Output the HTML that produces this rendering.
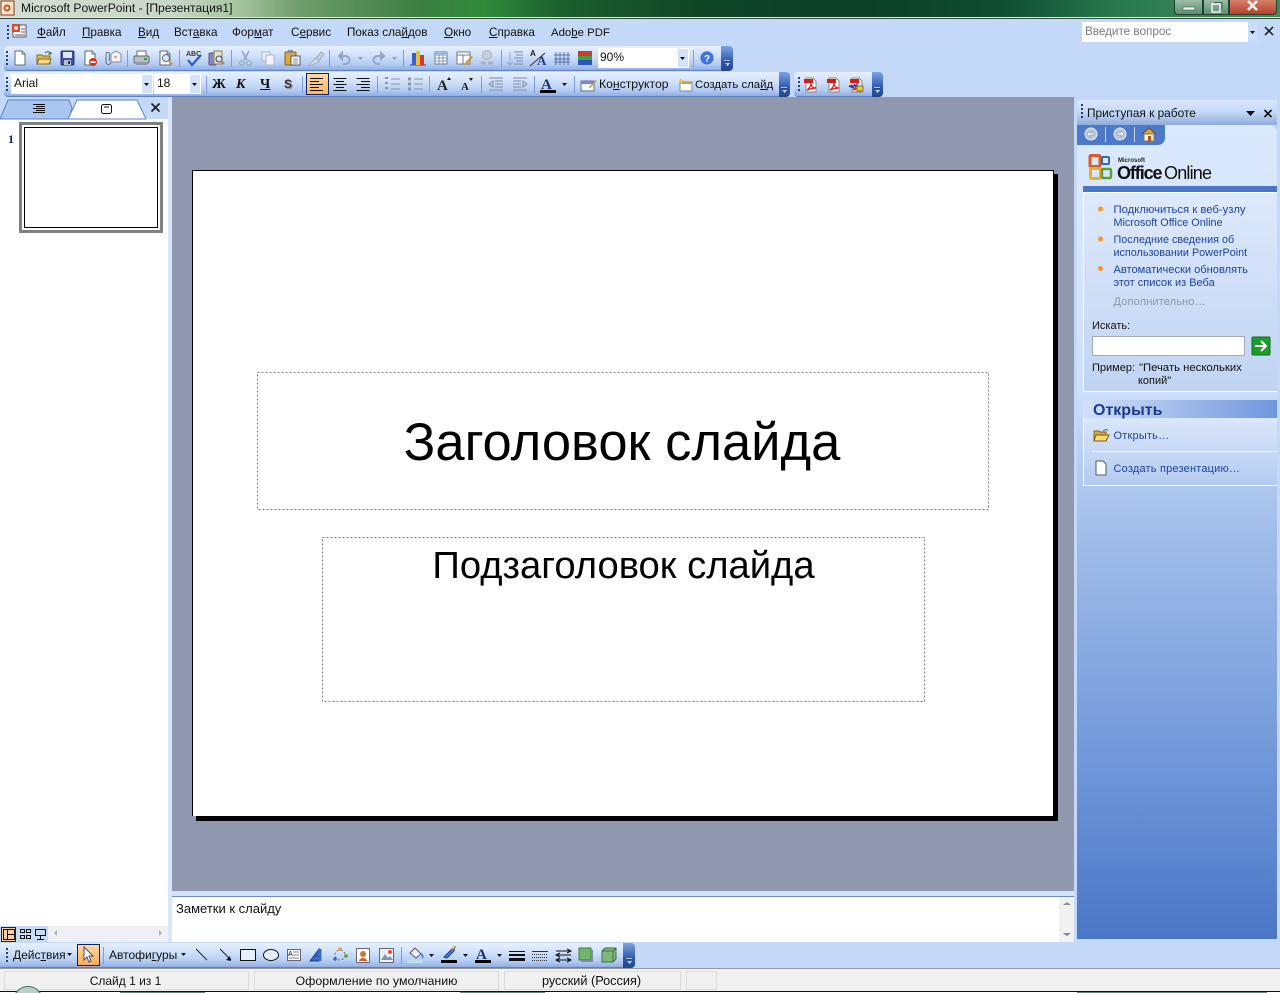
<!DOCTYPE html>
<html lang="ru"><head><meta charset="utf-8"><title>Microsoft PowerPoint</title>
<style>
html,body{margin:0;padding:0;width:1280px;height:993px;overflow:hidden;background:#c3d9f7}
body{position:relative;font-family:"Liberation Sans",sans-serif;font-size:12px;color:#111}
.a{position:absolute}
.t{position:absolute;white-space:nowrap;line-height:14px;height:14px}
.m{font-size:11.7px}
.tb{position:absolute;background:linear-gradient(#e6f0fe 0%,#d3e3fb 35%,#b5cdf3 75%,#8eaee4 100%);border-bottom:1px solid #5f82bf;border-radius:4px;box-sizing:border-box}
.ch{position:absolute;background:linear-gradient(#7da3e2,#2f5cae 60%,#1f478f);border-radius:0 4px 4px 0}
.lnk{color:#1d439e;font-size:11px;line-height:13px}
svg{position:absolute;left:0;top:0}
</style></head><body>

<!-- title bar -->
<div class="a" style="left:0;top:0;width:1280px;height:18px;background:linear-gradient(90deg,#d3ddd2 0,#c8d8c6 170px,#a9c6a1 235px,#6f9c6c 300px,#3b7f42 420px,#2f8a3a 485px,#1c5f2e 560px,#0f4627 700px,#0b3f26 850px,#0f4d30 1000px,#2a7a50 1120px,#3f8c62 1280px)"></div>
<div class="a" style="left:0;top:17px;width:1280px;height:1px;background:#dfe8df"></div>
<div class="a" style="left:0;top:18px;width:1280px;height:1px;background:#33473a"></div>
<div class="t" style="left:21px;top:1px;font-size:12.1px;color:#141414">Microsoft PowerPoint - [Презентация1]</div>
<div class="a" style="left:1174px;top:-3px;width:29px;height:18px;background:linear-gradient(#a6c4ad,#5b8f72);border:1px solid #23402f;border-radius:0 0 0 4px;box-sizing:border-box"></div>
<div class="a" style="left:1203px;top:-3px;width:26px;height:18px;background:linear-gradient(#a6c4ad,#5b8f72);border:1px solid #23402f;box-sizing:border-box"></div>
<div class="a" style="left:1229px;top:-3px;width:48px;height:18px;background:linear-gradient(#d98a74,#b5412d);border:1px solid #23402f;border-radius:0 0 4px 0;box-sizing:border-box"></div>

<!-- menu -->
<div class="t m" style="left:37px;top:26px"><u>Ф</u>айл</div>
<div class="t m" style="left:82px;top:26px"><u>П</u>равка</div>
<div class="t m" style="left:138px;top:26px"><u>В</u>ид</div>
<div class="t m" style="left:174px;top:26px">Вст<u>а</u>вка</div>
<div class="t m" style="left:232px;top:26px">Фор<u>м</u>ат</div>
<div class="t m" style="left:291px;top:26px">С<u>е</u>рвис</div>
<div class="t m" style="left:347px;top:26px">Показ сла<u>й</u>дов</div>
<div class="t m" style="left:444px;top:26px"><u>О</u>кно</div>
<div class="t m" style="left:489px;top:26px"><u>С</u>правка</div>
<div class="t" style="left:551px;top:26px;font-size:11.4px">Ado<u>b</u>e PDF</div>
<div class="a" style="left:1082px;top:22px;width:176px;height:20px;background:#fff"></div>
<div class="a" style="left:1248px;top:22px;width:10px;height:20px;background:#c9dcf8"></div>
<div class="t" style="left:1085px;top:25px;color:#7b7b7b;font-size:11.7px">Введите вопрос</div>

<!-- toolbars -->
<div class="tb" style="left:4px;top:46px;width:722px;height:25px"></div>
<div class="ch" style="left:721px;top:46px;width:12px;height:25px"></div>
<div class="tb" style="left:4px;top:72px;width:780px;height:25px"></div>
<div class="ch" style="left:779px;top:72px;width:11px;height:25px"></div>
<div class="tb" style="left:794px;top:72px;width:82px;height:25px"></div>
<div class="ch" style="left:872px;top:72px;width:11px;height:25px"></div>

<div class="a" style="left:598px;top:48px;width:91px;height:20px;background:#fff"></div>
<div class="a" style="left:677px;top:48px;width:12px;height:20px;background:#d2e2fa;border:1px solid #fff;box-sizing:border-box"></div>
<div class="t" style="left:600px;top:50px">90%</div>
<div class="a" style="left:11px;top:74px;width:142px;height:20px;background:#fff"></div>
<div class="a" style="left:141px;top:74px;width:12px;height:20px;background:#d2e2fa;border:1px solid #fff;box-sizing:border-box"></div>
<div class="t" style="left:14px;top:76px">Arial</div>
<div class="a" style="left:154px;top:74px;width:47px;height:20px;background:#fff"></div>
<div class="a" style="left:189px;top:74px;width:12px;height:20px;background:#d2e2fa;border:1px solid #fff;box-sizing:border-box"></div>
<div class="t" style="left:157px;top:76px">18</div>
<div class="a" style="left:306px;top:73px;width:23px;height:22px;background:linear-gradient(#ffd9a0,#fdb666);border:1px solid #0a246a;box-sizing:border-box"></div>
<div class="t" style="left:212px;top:78px;font:bold 14px/14px 'Liberation Serif',serif">Ж</div>
<div class="t" style="left:236px;top:78px;font:italic bold 14px/14px 'Liberation Serif',serif">К</div>
<div class="t" style="left:260px;top:78px;font:bold 14px/14px 'Liberation Serif',serif;text-decoration:underline">Ч</div>
<div class="t" style="left:284px;top:77px;font:bold 12px/14px 'Liberation Sans',sans-serif;color:#333;text-shadow:1px 1px 1px #8a8a8a">S</div>
<div class="t" style="left:599px;top:77px;font-size:12.2px">Ко<u>н</u>структор</div>
<div class="t" style="left:695px;top:78px;font-size:11.4px">Создать сла<u>й</u>д</div>

<!-- left pane -->
<div class="a" style="left:0;top:119px;width:168px;height:807px;background:#fff"></div>
<div class="a" style="left:168px;top:97px;width:4px;height:845px;background:#d9e6fb"></div>
<div class="t" style="left:8px;top:132px;font:bold 12px/14px 'Liberation Serif',serif;color:#14284f">1</div>
<div class="a" style="left:19px;top:122px;width:144px;height:111px;border:3px solid #808080;box-sizing:border-box;background:#fff"></div>
<div class="a" style="left:24px;top:127px;width:134px;height:101px;border:1px solid #000;box-sizing:border-box;background:#fff"></div>
<div class="a" style="left:0;top:926px;width:48px;height:16px;background:#c8dcf8"></div>
<div class="a" style="left:48px;top:926px;width:120px;height:16px;background:#eef0f3"></div>
<div class="a" style="left:1px;top:927px;width:15px;height:15px;background:#f5cfa8;border:1px solid #0a246a;box-sizing:border-box"></div>

<!-- workspace -->
<div class="a" style="left:172px;top:97px;width:902px;height:794px;background:#8f98ae"></div>
<div class="a" style="left:196px;top:174px;width:862px;height:647px;background:#000"></div>
<div class="a" style="left:192px;top:170px;width:862px;height:646px;background:#fff;border:solid #000;box-sizing:border-box;border-width:1px 1px 0 1px"></div>
<div class="t" style="left:256px;width:732px;text-align:center;top:411px;height:64px;font-size:52.5px;line-height:64px;color:#000">Заголовок слайда</div>
<div class="t" style="left:322px;width:603px;text-align:center;top:544px;height:44px;font-size:38.2px;line-height:44px;color:#000">Подзаголовок слайда</div>

<!-- notes -->
<div class="a" style="left:172px;top:891px;width:902px;height:5px;background:#d4e3fb"></div>
<div class="a" style="left:172px;top:896px;width:902px;height:1px;background:#6d8ccb"></div>
<div class="a" style="left:172px;top:897px;width:887px;height:45px;background:#fff"></div>
<div class="a" style="left:1059px;top:897px;width:15px;height:45px;background:#f1f1f1"></div>
<div class="t" style="left:176px;top:902px;font-size:13px">Заметки к слайду</div>

<!-- task pane -->
<div class="a" style="left:1074px;top:97px;width:3px;height:845px;background:#c3d9f7"></div>
<div class="a" style="left:1077px;top:100px;width:200px;height:25px;background:linear-gradient(#d9e7fc,#c7dbf8 45%,#8facde)"></div>
<div class="t" style="left:1087px;top:106px;font-size:11.9px">Приступая к работе</div>
<div class="a" style="left:1077px;top:125px;width:200px;height:814px;background:linear-gradient(#dbe9fd 0,#cfe0fa 260px,#a3bfea 400px,#6b93d7 660px,#4a76c6 814px);border-radius:0 8px 0 0"></div>
<div class="a" style="left:1077px;top:125px;width:88px;height:20px;background:#4d7ac8;border-radius:0 0 7px 0"></div>
<div class="a" style="left:1083px;top:186px;width:194px;height:6px;background:#4a76c8"></div>
<div class="a" style="left:1083px;top:192px;width:194px;height:200px;background:linear-gradient(#dde9fc,#c0d4f2);border-left:1px solid #fff;border-bottom:1px solid #fff;border-top:1px solid #fff;box-sizing:border-box"></div>
<div class="a" style="left:1083px;top:400px;width:194px;height:18px;background:linear-gradient(90deg,#d2e1f9,#6f96dd);border-radius:5px 0 0 0"></div>
<div class="a" style="left:1083px;top:418px;width:194px;height:68px;background:linear-gradient(#dae7fb,#b4cbf0);border-left:1px solid #fff;border-bottom:1px solid #fff;box-sizing:border-box"></div>
<div class="a" style="left:1092px;top:451px;width:185px;height:1px;background:#f2f7fe"></div>
<div class="t" style="left:1117px;top:164px;font-size:18px;line-height:18px;height:18px;font-weight:bold;letter-spacing:-1.1px;color:#101010">Office</div>
<div class="t" style="left:1164px;top:164px;font-size:18px;line-height:18px;height:18px;letter-spacing:-.8px;color:#101010">Online</div>
<div class="t" style="left:1118px;top:158px;font-size:6px;line-height:7px;height:7px;font-weight:bold;color:#222">Microsoft</div>
<div class="t lnk" style="left:1113.500px;top:204px;font-size:11.300px">Подключиться к веб-узлу</div>
<div class="t lnk" style="left:1113.500px;top:217px;font-size:10.800px">Microsoft Office Online</div>
<div class="t lnk" style="left:1113.500px;top:234px;font-size:10.800px">Последние сведения об</div>
<div class="t lnk" style="left:1113.500px;top:247px;font-size:10.800px">использовании PowerPoint</div>
<div class="t lnk" style="left:1113.500px;top:264px;font-size:11.100px">Автоматически обновлять</div>
<div class="t lnk" style="left:1113.500px;top:277px">этот список из Веба</div>
<div class="t lnk" style="left:1113.500px;top:296px;color:#8a98ad;letter-spacing:.15px">Дополнительно…</div>
<div class="t" style="left:1092px;top:319px;font-size:11px">Искать:</div>
<div class="a" style="left:1092px;top:336px;width:153px;height:20px;background:#fff;border:1px solid #a5acb5;box-sizing:border-box"></div>
<div class="t" style="left:1092px;top:361px;font-size:11px">Пример:</div>
<div class="t" style="left:1139px;top:361px;font-size:11.300px">"Печать нескольких</div>
<div class="t" style="left:1138px;top:374px;font-size:11px">копий"</div>
<div class="t" style="left:1093px;top:403px;font:bold 16px/15px 'Liberation Sans',sans-serif;height:15px;color:#1c3a8e">Открыть</div>
<div class="t lnk" style="left:1113.500px;top:430px;letter-spacing:.2px">Открыть…</div>
<div class="t lnk" style="left:1113.500px;top:463px;letter-spacing:.2px">Создать презентацию…</div>

<!-- drawing toolbar -->
<div class="tb" style="left:0;top:943px;width:628px;height:25px;border-radius:0 4px 4px 0"></div>
<div class="ch" style="left:623px;top:943px;width:12px;height:25px"></div>
<div class="a" style="left:77px;top:944px;width:23px;height:22px;background:linear-gradient(#ffd9a0,#fda95a);border:1px solid #0a246a;box-sizing:border-box"></div>
<div class="t" style="left:13px;top:948px">Дейс<u>т</u>вия</div>
<div class="t" style="left:109px;top:948px">Автофи<u>г</u>уры</div>

<!-- status -->
<div class="a" style="left:0;top:968px;width:1280px;height:23px;background:#f0f0f0;border-top:1px solid #9a9a9a;box-sizing:border-box"></div>
<div class="a" style="left:4px;top:971px;width:245px;height:19px;border:1px solid #dcdcdc;box-sizing:border-box"></div>
<div class="a" style="left:254px;top:971px;width:245px;height:19px;border:1px solid #dcdcdc;box-sizing:border-box"></div>
<div class="a" style="left:504px;top:971px;width:177px;height:19px;border:1px solid #dcdcdc;box-sizing:border-box"></div>
<div class="a" style="left:686px;top:971px;width:31px;height:19px;border:1px solid #dcdcdc;box-sizing:border-box"></div>
<div class="t" style="left:3px;width:245px;text-align:center;top:974px">Слайд 1 из 1</div>
<div class="t" style="left:254px;width:245px;text-align:center;top:974px;font-size:12.400px">Оформление по умолчанию</div>
<div class="t" style="left:504px;width:175px;text-align:center;top:974px;font-size:12.700px">русский (Россия)</div>
<div class="a" style="left:0;top:991px;width:1280px;height:2px;background:#fff"></div>
<div class="a" style="left:0;top:991px;width:1280px;height:1px;background:#111"></div>
<div class="a" style="left:120px;top:992px;width:85px;height:1px;background:#5c8a78"></div>
<div class="a" style="left:460px;top:992px;width:85px;height:1px;background:#5c8a78"></div>
<div class="a" style="left:1077px;top:992px;width:190px;height:1px;background:#5c8a78"></div>
<div class="a" style="left:13px;top:986px;width:30px;height:30px;border-radius:50%;background:#b9d2c6;border:1px solid #43685e;box-sizing:border-box"></div>

<svg width="1280" height="993" viewBox="0 0 1280 993" fill="none">
<defs>
<g id="dd"><path d="M0 0h5l-2.500 3z" fill="#111"/></g>
<g id="ddg"><path d="M0 0h5l-2.500 3z" fill="#8f9fb8"/></g>
<g id="grip"><rect x="0" y="0" width="2" height="2" fill="#27416f"/><rect x="0" y="4" width="2" height="2" fill="#27416f"/><rect x="0" y="8" width="2" height="2" fill="#27416f"/><rect x="0" y="12" width="2" height="2" fill="#27416f"/></g>
<g id="che"><path d="M0 0h6v1h-6zM1 3h5l-2.500 3z" fill="#fff"/><path d="M0 1h6M1.500 4h3" stroke="#111" stroke-width=".6"/></g>
<g id="doc"><path d="M3 1h7l3 3v11H3z" fill="#fff" stroke="#5a6a80"/><path d="M10 1v3h3" fill="#dfe6f0" stroke="#5a6a80"/></g>
<g id="pdf"><path d="M3 1h7l3 3v11H3z" fill="#fbfbf6" stroke="#8a8a80"/><rect x="1" y="2" width="9" height="4" fill="#d9181c"/><path d="M4 13c3-2 4-5 4-7 0 3 2 5 5 5-3 0-6 1-9 2z" fill="none" stroke="#d9181c" stroke-width="1.200"/></g>
</defs>

<!-- placeholders -->
<rect x="257.500" y="372.500" width="731" height="137" stroke="#808080" stroke-dasharray="2 2"/>
<rect x="322.500" y="537.500" width="602" height="164" stroke="#808080" stroke-dasharray="2 2"/>

<!-- app icon + title -->
<rect x="1" y="1" width="13" height="14" fill="#f6e4cf" stroke="#8a3d20"/><circle cx="7" cy="8" r="3.500" fill="#d2531f"/><circle cx="7" cy="8" r="1.500" fill="#fff3e6"/>
<!-- window controls -->
<rect x="1183" y="7" width="12" height="3" fill="#eef4ef" stroke="#3e5c4b" stroke-width=".6"/>
<rect x="1212" y="4" width="8" height="8" fill="none" stroke="#eef4ef" stroke-width="1.500"/><path d="M1214 2.500h8v7" stroke="#3e5c4b"/>
<path d="M1248 1l9 9M1257 1l-9 9" stroke="#f6f3f0" stroke-width="2.600"/>

<!-- menu grip + doc icon -->
<use href="#grip" x="7" y="25"/>
<rect x="13" y="25" width="13" height="12" fill="#fff" stroke="#556"/><rect x="12" y="24" width="8" height="8" fill="#d94a26"/><circle cx="16" cy="28" r="2" fill="#fbe2d2"/><path d="M21 29h4M21 32h4M15 35h10" stroke="#556"/>
<path d="M1265 27l8 8M1273 27l-8 8" stroke="#111" stroke-width="1.500"/>
<use href="#dd" x="1250" y="31"/>

<!-- toolbar 1 -->
<use href="#grip" x="6" y="51"/>
<use href="#doc" x="12" y="50"/>
<g transform="translate(36,50)"><path d="M1 5h5l1 1h7v8H1z" fill="#e2b64c" stroke="#8a6a1c"/><path d="M3 9h12l-2 5H1z" fill="#f8dc82" stroke="#8a6a1c"/><path d="M9 3c2-2 4-2 5 0l-1 1 2 0v-2" stroke="#3e6f3e" fill="none"/></g>
<g transform="translate(60,50)"><rect x="1" y="1" width="13" height="14" rx="1" fill="#3f4f9f" stroke="#27306c"/><rect x="3" y="2" width="9" height="6" fill="#dfe6f8"/><rect x="4" y="10" width="7" height="5" fill="#b6bfd0"/><rect x="8" y="11" width="2" height="3" fill="#27306c"/></g>
<g transform="translate(82,50)"><use href="#doc"/><circle cx="11" cy="12" r="4" fill="#d8301e"/><rect x="8.500" y="11" width="5" height="2" fill="#fff"/></g>
<g transform="translate(105,50)"><path d="M6 4v8a2.500 2.500 0 0 1-5 0V4a1.700 1.700 0 0 1 3.400 0v7" stroke="#5d6f8e" fill="none"/><path d="M6 4l5-3 5 3v8H6z" fill="#f5f5f5" stroke="#7f8da4"/><path d="M9 7h3" stroke="#c43"/></g>
<rect x="127" y="50" width="1" height="17" fill="#7d9ed6"/>
<g transform="translate(133,50)"><rect x="4" y="1" width="9" height="5" fill="#fff" stroke="#667"/><rect x="1" y="6" width="15" height="7" rx="1" fill="#b9bfca" stroke="#5f6673"/><rect x="3" y="12" width="11" height="3" fill="#8f96a4"/><rect x="11" y="8" width="3" height="2" fill="#2aa13c"/></g>
<g transform="translate(157,50)"><use href="#doc"/><circle cx="9" cy="8" r="3.500" fill="#dce8f7" stroke="#667"/><path d="M11.500 10.500l4 4" stroke="#d79a3c" stroke-width="2"/></g>
<rect x="179" y="50" width="1" height="17" fill="#7d9ed6"/>
<text x="186" y="56" font-family="Liberation Sans" font-size="7" font-weight="bold" fill="#333">ABC</text>
<path d="M188 60l4 5 9-10" stroke="#2d5bc0" stroke-width="2.200" fill="none"/>
<g transform="translate(208,50)"><rect x="1" y="3" width="7" height="12" rx="1" fill="#8888bb" stroke="#555580"/><rect x="6" y="1" width="8" height="13" fill="#e9e3c8" stroke="#8a8260"/><circle cx="11" cy="9" r="3" fill="#d9e6f5" stroke="#445"/><path d="M13 11l3 3" stroke="#b88a2a" stroke-width="2"/></g>
<rect x="231" y="50" width="1" height="17" fill="#7d9ed6"/>
<g stroke="#8f9fb8" fill="none"><path d="M242 51l5 9M249 51l-5 9" stroke-width="1.400"/><circle cx="242" cy="63" r="2.300"/><circle cx="249" cy="63" r="2.300"/></g>
<g transform="translate(260,50)"><rect x="2" y="2" width="8" height="9" fill="#e9eef6" stroke="#a9b6c8"/><rect x="6" y="5" width="8" height="10" fill="#f1f4f9" stroke="#a9b6c8"/></g>
<g transform="translate(284,50)"><rect x="1" y="2" width="11" height="13" rx="1" fill="#d9a93f" stroke="#7d5f18"/><rect x="4" y="0" width="5" height="3" fill="#8a8a8a"/><rect x="7" y="6" width="9" height="9" fill="#fff" stroke="#556"/><path d="M9 9h5M9 11h5M9 13h5" stroke="#889"/></g>
<g transform="translate(308,50)"><path d="M1 15l7-7 3 3-7 4z" fill="#dfe3ea" stroke="#a6b0c0"/><path d="M8 8l5-6 3 2-5 7z" fill="#c6cdd9" stroke="#a6b0c0"/></g>
<rect x="329" y="50" width="1" height="17" fill="#7d9ed6"/>
<path d="M339 56h6c6 0 6 8 0 8h-2M339 56l3-3v6z" stroke="#95a6c2" stroke-width="2" fill="none"/>
<use href="#ddg" x="358" y="57"/>
<path d="M384 56h-6c-6 0-6 8 0 8h2M384 56l-3-3v6z" stroke="#95a6c2" stroke-width="2" fill="none"/>
<use href="#ddg" x="392" y="57"/>
<rect x="403" y="50" width="1" height="17" fill="#7d9ed6"/>
<g transform="translate(410,50)"><path d="M0 15h16" stroke="#445"/><rect x="2" y="3" width="4" height="12" fill="#3a5ecf"/><rect x="6" y="1" width="4" height="14" fill="#e3c13a"/><rect x="10" y="5" width="4" height="10" fill="#cf3a2f"/></g>
<g transform="translate(433,50)"><rect x="2" y="2" width="12" height="12" fill="#fff" stroke="#6a7fa8"/><path d="M2 5h12M2 8h12M2 11h12M6 2v12M10 2v12" stroke="#6a7fa8" stroke-width=".8"/><rect x="2" y="2" width="12" height="3" fill="#9db6dc"/></g>
<g transform="translate(456,50)"><rect x="1" y="2" width="13" height="12" fill="#fff" stroke="#778"/><path d="M1 5h13M7 5v9" stroke="#778"/><path d="M8 14l7-8 2 1-6 8z" fill="#c99a3a"/></g>
<g transform="translate(479,50)"><circle cx="8" cy="5" r="4.500" fill="#c9cfd9" stroke="#a9b1bf"/><path d="M2 13h5M9 13h5" stroke="#a9b1bf" stroke-width="3"/></g>
<rect x="501" y="50" width="1" height="17" fill="#7d9ed6"/>
<path d="M510 52v13M507 62l3 3 3-3" stroke="#95a6c2" fill="none"/><path d="M514 52h9M516 55h7M514 58h9M516 61h7M514 64h9" stroke="#7f8da4"/>
<text x="530" y="56" font-family="Liberation Sans" font-size="8" font-weight="bold" fill="#222">A</text><text x="537" y="65" font-family="Liberation Serif" font-size="13" font-weight="bold" fill="#1d3d8f">A</text><path d="M530 66l15-13" stroke="#333"/>
<g stroke="#4c6cae" stroke-width=".9"><path d="M556 52v13M560 52v13M564 52v13M568 52v13M554 55h16M554 59h16M554 62h16"/></g>
<rect x="578" y="51" width="14" height="5" fill="#d23b2a"/><rect x="578" y="56" width="14" height="5" fill="#3aa24a"/><rect x="578" y="60" width="14" height="5" fill="#2c55bf"/>
<use href="#dd" x="680" y="57"/>
<rect x="693" y="50" width="1" height="17" fill="#7d9ed6"/>
<circle cx="707" cy="58" r="7" fill="#3f73d6" stroke="#bcd0f2"/><text x="704" y="62" font-family="Liberation Sans" font-size="10" font-weight="bold" fill="#fff">?</text>
<use href="#che" x="724" y="60"/>

<!-- toolbar 2 -->
<use href="#grip" x="6" y="77"/>
<use href="#dd" x="144" y="83"/><use href="#dd" x="192" y="83"/>
<rect x="206" y="76" width="1" height="17" fill="#7d9ed6"/>
<rect x="302" y="76" width="1" height="17" fill="#7d9ed6"/>
<g stroke="#111"><path d="M310 78.500h13M310 81.500h9M310 84.500h13M310 87.500h9M310 90.500h13"/><path d="M333.500 78.500h13M336 81.500h8M333.500 84.500h13M336 87.500h8M333.500 90.500h13"/><path d="M356.500 78.500h13M361 81.500h9M356.500 84.500h13M361 87.500h9M356.500 90.500h13"/></g>
<rect x="377" y="76" width="1" height="17" fill="#7d9ed6"/>
<g stroke="#8495b4"><path d="M391 79h9M391 84h9M391 89h9M414 79h9M414 84h9M414 89h9"/><path d="M385 78h3M385 83h3M385 88h3" stroke-width="2"/><path d="M408 79h3M408 84h3M408 89h3" stroke-width="3"/></g>
<rect x="429" y="76" width="1" height="17" fill="#7d9ed6"/>
<text x="437" y="90" font-family="Liberation Serif" font-size="15" font-weight="bold" fill="#222">A</text><path d="M447 80l2-3 2 3z" fill="#111"/>
<text x="461" y="90" font-family="Liberation Serif" font-size="11" font-weight="bold" fill="#222">A</text><path d="M469 78l2 3 2-3z" fill="#111"/>
<rect x="481" y="76" width="1" height="17" fill="#7d9ed6"/>
<g stroke="#7f8da4"><path d="M489 78h14M495 81h8M495 84h8M495 87h8M489 90h14M489 84l4-3v6z"/><path d="M513 78h14M513 81h8M513 84h8M513 87h8M513 90h14M527 84l-4-3v6z"/></g>
<rect x="534" y="76" width="1" height="17" fill="#7d9ed6"/>
<text x="541" y="89" font-family="Liberation Serif" font-size="15" font-weight="bold" fill="#1d3070">A</text><rect x="540" y="90" width="16" height="3" fill="#000"/>
<use href="#dd" x="562" y="83"/>
<rect x="574" y="76" width="1" height="17" fill="#7d9ed6"/>
<g transform="translate(581,76)"><rect x="0" y="5" width="13" height="10" fill="#f3f6fb" stroke="#60708c"/><rect x="0" y="5" width="13" height="3" fill="#6f8fca"/><path d="M8 11l7-7 1 1-7 7z" fill="#c99a3a"/></g>
<g transform="translate(677,76)"><rect x="3" y="6" width="12" height="9" fill="#fff" stroke="#7c8aa0"/><rect x="3" y="6" width="12" height="2" fill="#c9a246"/><path d="M4 2l1 2 2 1-2 1-1 2-1-2-2-1 2-1z" fill="#f0c63c"/></g>
<use href="#che" x="781" y="87"/>
<use href="#grip" x="798" y="77"/>
<use href="#pdf" x="803" y="77"/><use href="#pdf" x="826" y="77"/>
<g transform="translate(849,77)"><use href="#pdf"/><path d="M0 9h7l-2-2M0 9l5 2" stroke="#1c3a9e" stroke-width="1.400"/><rect x="8" y="9" width="6" height="5" fill="#e8c94a" stroke="#8a7420"/></g>
<use href="#che" x="874" y="87"/>

<!-- left tabs -->
<path d="M0 119L8 100H69L72 108L69 119Z" fill="#a9c5f2" stroke="#5f82bf"/>
<path d="M68 119L77 100H137L146 119Z" fill="#fff" stroke="#5f82bf"/>
<path d="M33 104.500h12M36 106.500h9M33 108.500h12M36 110.500h9M33 112.500h12" stroke="#111"/>
<rect x="101.500" y="104.500" width="10" height="9" rx="2" stroke="#111" fill="#fff"/><path d="M104 107h5" stroke="#111"/>
<path d="M151.500 103.500l8 8M159.500 103.500l-8 8" stroke="#222" stroke-width="1.800"/>

<!-- view buttons -->
<g stroke="#111" fill="none"><rect x="3.500" y="929.500" width="11" height="10"/><path d="M7.500 929.500v10M7.500 934.500h7"/><rect x="20.500" y="929.500" width="4" height="3"/><rect x="26.500" y="929.500" width="4" height="3"/><rect x="20.500" y="935.500" width="4" height="3"/><rect x="26.500" y="935.500" width="4" height="3"/><rect x="35.500" y="929.500" width="10" height="6"/><path d="M40.500 935.500v4M37 939.500h7"/></g>
<path d="M57 930v6l-3-3z" fill="#a9b0ba"/><path d="M159 930v6l3-3z" fill="#a9b0ba"/>
<path d="M1063 905h8l-4-3z" fill="#909090"/><path d="M1063 933h8l-4 3z" fill="#808080"/>

<!-- task pane icons -->
<path d="M1081 104h2v2h-2zM1081 108h2v2h-2zM1081 112h2v2h-2zM1081 116h2v2h-2z" fill="#27416f"/>
<path d="M1246 111h9l-4.500 5z" fill="#111"/>
<path d="M1264.500 110l7 7M1271.500 110l-7 7" stroke="#111" stroke-width="1.600"/>
<circle cx="1091" cy="134" r="6" fill="#b9c6dc" stroke="#dfe7f3"/><path d="M1087 134l3-3v2h4v2h-4v2z" fill="#f2f5fa" stroke="#7c8ba5" stroke-width=".5"/>
<rect x="1105" y="127" width="1" height="15" fill="#c7d8f5"/>
<circle cx="1120" cy="134" r="6" fill="#b9c6dc" stroke="#dfe7f3"/><path d="M1124 134l-3-3v2h-4v2h4v2z" fill="#f2f5fa" stroke="#7c8ba5" stroke-width=".5"/>
<rect x="1134" y="127" width="1" height="15" fill="#c7d8f5"/>
<path d="M1142 134l7-6 7 6" fill="#d9a23c" stroke="#6a4a14"/><rect x="1144" y="134" width="10" height="7" fill="#f9f3de" stroke="#8a7450"/><rect x="1148" y="136" width="3" height="5" fill="#a85c20"/>
<!-- office logo -->
<rect x="1090" y="155.500" width="10" height="11" rx="1" stroke="#d95b26" stroke-width="3"/><rect x="1102" y="157" width="7" height="7" rx="1" stroke="#3566c0" stroke-width="2"/><rect x="1090.500" y="168.500" width="10" height="10" rx="1" stroke="#e6b026" stroke-width="3"/><rect x="1102" y="169" width="9" height="9" rx="1" stroke="#5c9a3a" stroke-width="2.400"/>
<!-- bullets -->
<circle cx="1100.500" cy="209" r="2.500" fill="#f29a26"/><circle cx="1100.500" cy="239" r="2.500" fill="#f29a26"/><circle cx="1100.500" cy="268.500" r="2.500" fill="#f29a26"/>
<rect x="1252" y="337" width="18" height="18" rx="1" fill="#1f9a2c" stroke="#0f6f1a"/><path d="M1255 346h10M1261 341l5 5-5 5" stroke="#fff" stroke-width="2" fill="none"/>
<g transform="translate(1093,428)"><path d="M1 3h5l1 1h6v9H1z" fill="#d9a93f" stroke="#7d5f18"/><path d="M3 7h13l-3 6H1z" fill="#f8d878" stroke="#7d5f18"/><path d="M10 3c2-2 4-2 5 0" stroke="#5c7a3a"/></g>
<g transform="translate(1093,460)"><path d="M3 1h7l3 3v11H3z" fill="#fff" stroke="#4c5b72"/></g>

<!-- drawing toolbar icons -->
<use href="#grip" x="6" y="948"/>
<use href="#dd" x="67" y="953"/>
<path d="M84 947v13l3-3 2 5 2-1-2-5h4z" fill="#fff" stroke="#3d4f73"/>
<rect x="103" y="947" width="1" height="17" fill="#7d9ed6"/>
<use href="#dd" x="181" y="953"/>
<path d="M196 949l11 11" stroke="#222"/>
<path d="M220 949l11 11" stroke="#222"/><path d="M231 961l-5-1 4-4z" fill="#111"/>
<rect x="240.500" y="949.500" width="15" height="11" stroke="#111" fill="#e8f0fc"/>
<ellipse cx="271" cy="955" rx="7.500" ry="5.500" stroke="#111" fill="#e8f0fc"/>
<rect x="287.500" y="949.500" width="13" height="11" fill="#fff" stroke="#667"/><text x="288" y="956" font-family="Liberation Sans" font-size="7" fill="#111">A</text><path d="M293 952h6M293 955h6M289 958h10" stroke="#556" stroke-width=".8"/>
<path d="M310 961l9-12v12zM314 956h5" fill="#3c68c8" stroke="#1e3f8c"/><path d="M320 949v12" stroke="#3c68c8" stroke-width="3"/>
<g transform="translate(332,947)"><circle cx="8" cy="8" r="5" stroke="#667" stroke-dasharray="2 2"/><circle cx="8" cy="2" r="1.800" fill="#e5a23c"/><circle cx="14" cy="9" r="1.800" fill="#5c9a3a"/><circle cx="3" cy="12" r="1.800" fill="#3566c0"/></g>
<g transform="translate(356,947)"><rect x="0.500" y="1.500" width="13" height="14" fill="#fff" stroke="#667"/><circle cx="7" cy="7" r="3" fill="#c07a3a"/><path d="M3 14c0-4 8-4 8 0z" fill="#d25c2a"/></g>
<g transform="translate(379,947)"><rect x="0.500" y="1.500" width="14" height="14" fill="#eef2f8" stroke="#667"/><path d="M2 13l4-6 3 4 2-2 3 4z" fill="#7f93b6"/><circle cx="11" cy="5" r="2" fill="#e0553a"/></g>
<rect x="401" y="947" width="1" height="17" fill="#7d9ed6"/>
<g transform="translate(407,946)"><path d="M3 7l5-5 6 6-5 4z" fill="#eef2f8" stroke="#556"/><path d="M14 8c2 1 2 3 1 4" stroke="#4f8fd8" stroke-width="2"/><rect x="0" y="14" width="15" height="3" fill="#bfe0ea"/></g>
<use href="#dd" x="429" y="954"/>
<g transform="translate(441,946)"><path d="M3 11l8-8 3-2-1 4-7 7z" fill="#4f7ad8" stroke="#1e3f8c"/><path d="M11 3l3-2" stroke="#d9a23c" stroke-width="2"/><rect x="0" y="14" width="16" height="3" fill="#000"/></g>
<use href="#dd" x="463" y="954"/>
<text x="476" y="959" font-family="Liberation Serif" font-size="15" font-weight="bold" fill="#1d3070">A</text><rect x="475" y="960" width="16" height="3" fill="#000"/>
<use href="#dd" x="497" y="954"/>
<g fill="#111"><rect x="509" y="951" width="16" height="1"/><rect x="509" y="954" width="16" height="2"/><rect x="509" y="958" width="16" height="3"/></g>
<g stroke="#333"><path d="M532 951.500h16"/><path d="M532 954.500h16M532 957.500h16M532 960.500h16" stroke-dasharray="1 1"/></g>
<g stroke="#111" fill="none"><path d="M556 951h15M567 949l4 2-4 2M556 955h15M560 953l-4 2 4 2M556 960h15M560 958l-4 2 4 2M567 958l4 2-4 2"/></g>
<rect x="579" y="948" width="12" height="12" fill="#6fb36f" stroke="#3f7f3f"/><rect x="581" y="960" width="12" height="2" fill="#7c8aa8"/><rect x="591" y="950" width="2" height="12" fill="#7c8aa8"/>
<path d="M602 951l3-3h11v11l-3 3h-11z" fill="#7fb87a" stroke="#3f6f3f"/><path d="M602 951h11v11M613 951l3-3" stroke="#3f6f3f" fill="none"/>
<use href="#che" x="626" y="958"/>
</svg>
</body></html>
